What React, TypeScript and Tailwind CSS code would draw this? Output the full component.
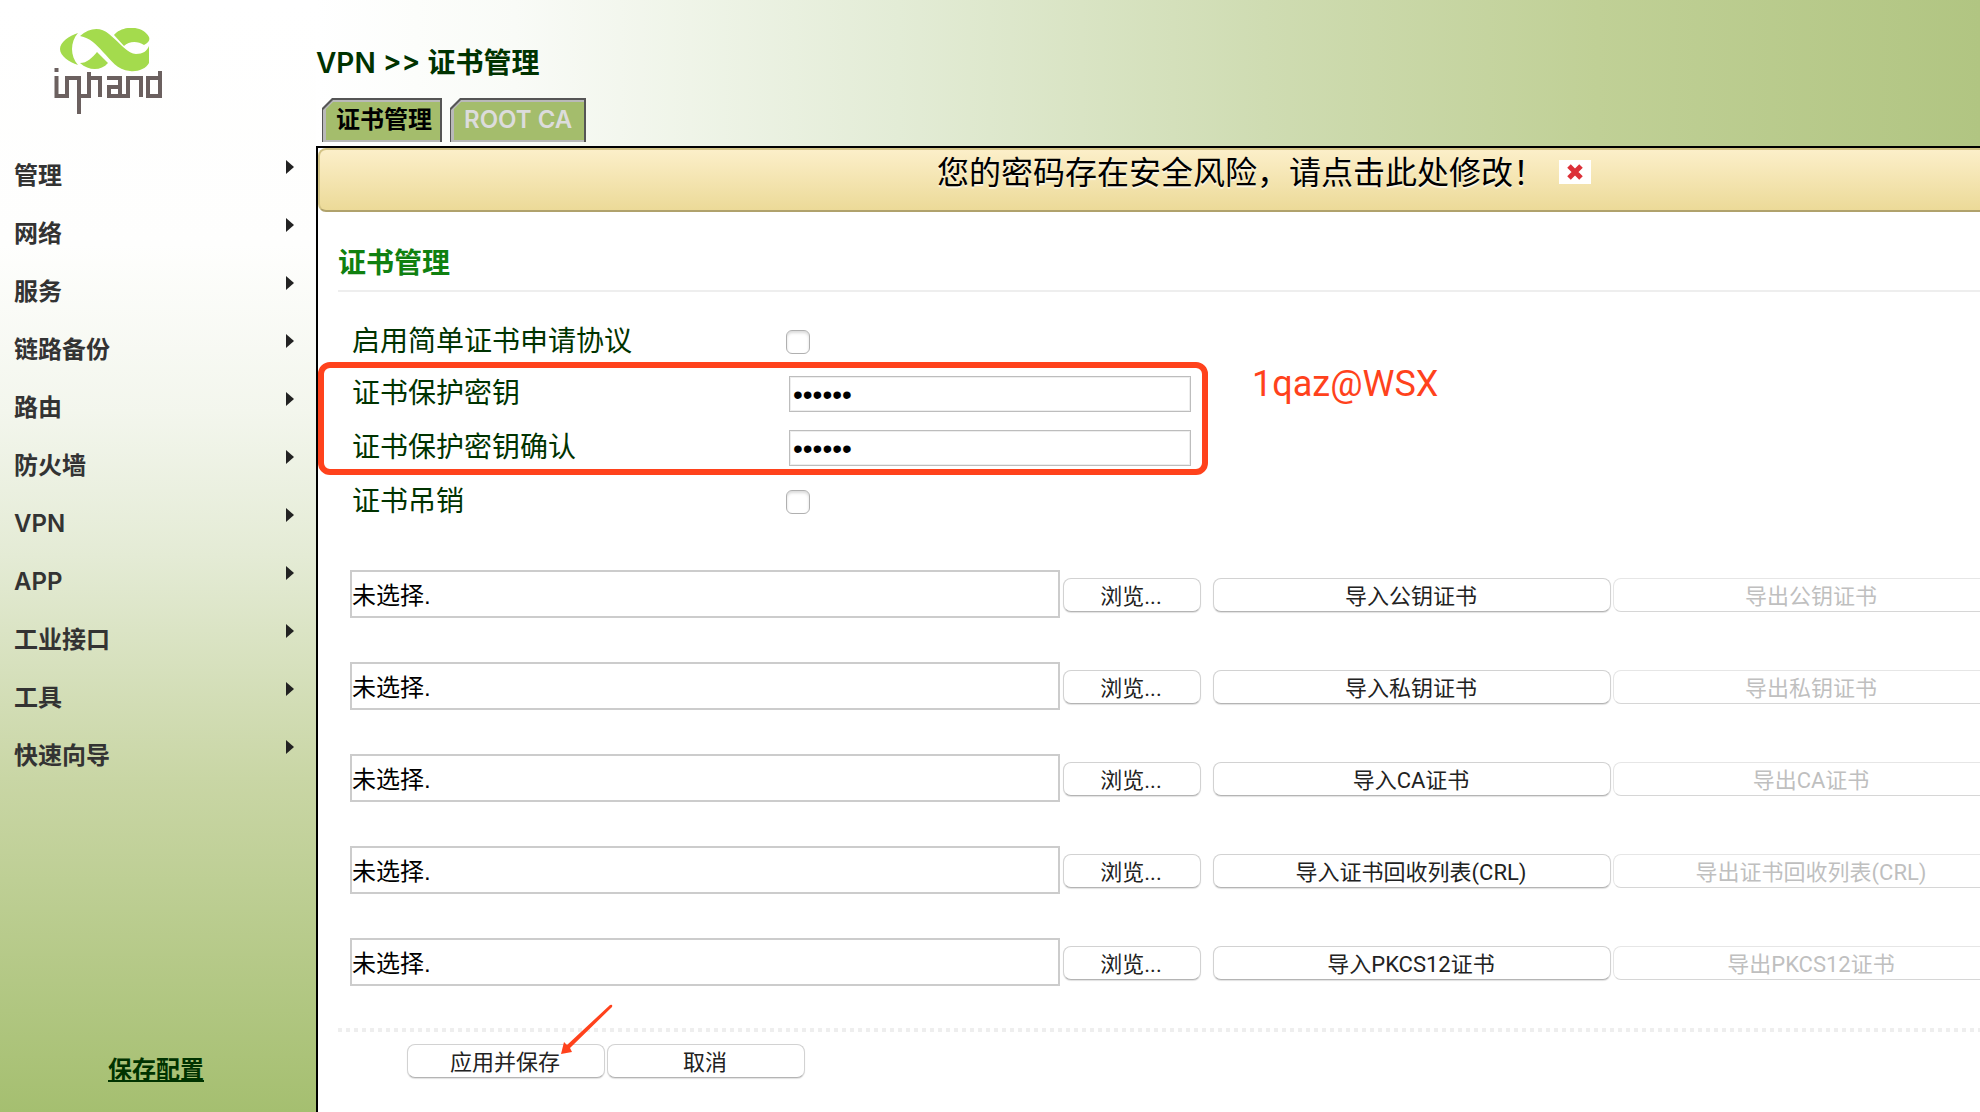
import React from "react";

const menu = ["管理", "网络", "服务", "链路备份", "路由", "防火墙", "VPN", "APP", "工业接口", "工具", "快速向导"];

const files = [
  ["导入公钥证书", "导出公钥证书"],
  ["导入私钥证书", "导出私钥证书"],
  ["导入CA证书", "导出CA证书"],
  ["导入证书回收列表(CRL)", "导出证书回收列表(CRL)"],
  ["导入PKCS12证书", "导出PKCS12证书"],
];

const buttonClass =
  "h-[34px] shrink-0 rounded-lg border border-[#d2d2d2] border-b-[#b4b4b4] bg-white pt-0.5 pr-0.5 font-['Roboto','Noto_Sans_CJK_SC',sans-serif] text-[22px] leading-8 text-[#222] shadow-[0_1px_1px_rgba(0,0,0,0.12)] disabled:border-[#e6e6e6] disabled:border-b-[#d6d6d6] disabled:text-[#bfbfbf] disabled:shadow-none";

const checkClass =
  "-ml-[3px] block size-6 appearance-none rounded-md border border-[#b0b0b0] bg-white shadow-[inset_0_2px_3px_rgba(0,0,0,0.15)] checked:bg-[#108010]";

const inputClass =
  "block h-9 w-[402px] border border-[#bdbdbd] bg-white px-[3px] pt-0.5 text-[28px] leading-8 text-black shadow-[inset_0_0_0_1px_#eee]";

function Logo() {
  return (
    <svg aria-label="inhand" role="img" viewBox="0 0 110 90" className="ml-[53px] h-[90px] w-[110px] shrink-0">
      <g fill="#a4db4d">
        <path d="M25 5C16 8 7 14 7 21c0 7 9 13 18 16C17 28 17 14 25 5Z" />
        <path d="M27 8C36 0 47-2 56 6c12 10 19 20 27 20 7 0 11-3 13-8V35C93 41 84 44 77 43 64 42 58 32 50 24 43 16 37 10 27 8Z" />
        <path d="M27 35c7 0 12-5 17-11l11 11C48 43 36 43 27 35Z" />
        <path d="M61 7C68-2 89-4 96 9c1 3 0 5-5 8C85 13 76 13 71 18Z" />
      </g>
      <g fill="none" stroke="#6b605f" strokeWidth="4">
        <path d="M3.500 40v4M3.500 48v20H14V50h12v36" />
        <path d="M26 68h10V44M36 50h11v19" />
        <path d="M54 50h13v18H56v-9h11M67 68h8V50h13v19" />
        <path d="M107 43v25H95V50h12" />
      </g>
    </svg>
  );
}

function Field({ id, label, children }: { id: string; label: string; children: React.ReactNode }) {
  return (
    <div className="flex h-[54px] items-center">
      <label htmlFor={id} className="w-[451px] shrink-0 pl-3.5 text-[28px] leading-9 text-[#003300]">
        {label}
      </label>
      {children}
    </div>
  );
}

function Tab({ label, active }: { label: string; active?: boolean }) {
  return (
    <button
      type="button"
      className="h-11 bg-[#555] pt-0.5 pr-0.5 pl-px [clip-path:polygon(10px_0,100%_0,100%_100%,0_100%,0_10px)]"
    >
      <span className="block h-full bg-[#b9b9b9] pt-0.5 pb-0.5 pl-[3px] [clip-path:polygon(10px_0,100%_0,100%_100%,0_100%,0_10px)]">
        <span
          className={
            "block h-full bg-[#a4bd6c] pl-2.5 text-2xl leading-9 font-semibold whitespace-nowrap [clip-path:polygon(7px_0,100%_0,100%_100%,0_100%,0_7px)] " +
            (active ? "pr-2 text-black" : "pr-3 text-[#dcdcdc]")
          }
        >
          {label}
        </span>
      </span>
    </button>
  );
}

export default function App() {
  return (
    <div className="flex min-h-screen overflow-hidden bg-white font-['Liberation_Sans','Noto_Sans_CJK_SC',sans-serif]">
      <aside className="flex w-[316px] shrink-0 flex-col bg-[linear-gradient(to_bottom,#ffffff_0%,#fefefd_22%,#f3f6ed_37%,#e4ebd5_50%,#c9d6a5_70%,#a5bf70_100%)] pt-7">
        <Logo />
        <nav className="mt-7 font-['Inter','Noto_Sans_CJK_SC',sans-serif]">
          <ul>
            {menu.map((item) => (
              <li key={item}>
                <a href="#" className="flex h-[58px] items-start justify-between pr-[22px] pl-3.5 text-2xl font-semibold text-[#333]">
                  <span className="pt-3.5">{item}</span>
                  <svg viewBox="0 0 8 14" className="mt-3.5 h-3.5 w-2" fill="#222">
                    <path d="M0 0 8 7 0 14Z" />
                  </svg>
                </a>
              </li>
            ))}
          </ul>
        </nav>
        <a href="#" className="mt-auto mb-6 ml-[108px] self-start text-2xl leading-9 font-bold text-[#003300] underline">
          保存配置
        </a>
      </aside>

      <main className="flex min-w-0 flex-1 flex-col overflow-hidden">
        <header className="h-[146px] bg-[linear-gradient(to_right,#ffffff_0%,#f9fbf7_12%,#e3ecd6_35%,#cfdcb2_57%,#c0d096_77%,#b1c582_100%)] font-['Inter','Noto_Sans_CJK_SC',sans-serif]">
          <h1 className="pt-[45px] text-[28px] leading-9 font-semibold text-[#003300]">VPN &gt;&gt; 证书管理</h1>
          <div className="mt-[17px] flex gap-2 pl-1.5">
            <Tab label="证书管理" active />
            <Tab label="ROOT CA" />
          </div>
        </header>

        <div className="flex-1 border-t-2 border-l-2 border-black">
          <div className="flex h-16 min-w-[1892px] items-start justify-center gap-3.5 rounded-lg border-2 border-[#d3c385] border-b-[#b0a26c] bg-linear-to-b from-[#fcefc9] to-[#ecda98] pt-[3px]">
            <a href="#" className="text-[32px] leading-10 text-black [text-shadow:0_2px_1px_rgba(255,255,255,0.7)]">
              您的密码存在安全风险，请点击此处修改！
            </a>
            <button type="button" aria-label="关闭" className="mt-[7px] flex h-6 w-8 items-center justify-center bg-white">
              <svg viewBox="0 0 16 16" className="size-4" stroke="#dc3038" strokeWidth="5">
                <path d="M2 2 14 14M14 2 2 14" />
              </svg>
            </button>
          </div>

          <section className="pl-5">
            <h2 className="border-b-2 border-[#eee] pt-[34px] pb-2 text-[28px] leading-9 font-bold text-[#108010]">证书管理</h2>
            <div className="relative mt-[22px] mb-[42px] h-[214px]">
              <div className="pt-px">
                <Field id="scep" label="启用简单证书申请协议">
                  <input id="scep" type="checkbox" className={checkClass} />
                </Field>
              </div>
              <div className="-mt-0.5">
                <Field id="key" label="证书保护密钥">
                  <input id="key" type="password" defaultValue="secret" className={inputClass} />
                </Field>
                <Field id="confirm" label="证书保护密钥确认">
                  <input id="confirm" type="password" defaultValue="secret" className={inputClass} />
                </Field>
                <Field id="revoke" label="证书吊销">
                  <input id="revoke" type="checkbox" className={checkClass} />
                </Field>
              </div>
              <div className="pointer-events-none absolute top-12 -left-5 h-[113px] w-[890px] rounded-xl border-6 border-[#ff421c]" />
              <p className="absolute top-12 left-[914px] font-[Roboto] text-4xl leading-11 text-[#ff421c]">1qaz@WSX</p>
            </div>

            <div className="flex flex-col gap-11 pl-3">
              {files.map(([load, save]) => (
                <div key={load} className="flex items-center">
                  <input
                    type="text"
                    readOnly
                    aria-label={load}
                    value="未选择."
                    className="h-12 w-[710px] shrink-0 border-2 border-[#ccc] pb-0.5 text-2xl text-black"
                  />
                  <button type="button" className={buttonClass + " mt-0.5 ml-[3px] w-[138px]"}>
                    浏览...
                  </button>
                  <button type="button" className={buttonClass + " mt-0.5 ml-3 w-[398px]"}>
                    {load}
                  </button>
                  <button type="button" disabled className={buttonClass + " mt-0.5 ml-0.5 w-[398px]"}>
                    {save}
                  </button>
                </div>
              ))}
            </div>

            <div className="mt-[42px] h-1 bg-[repeating-linear-gradient(to_right,#eee_0_4px,transparent_4px_8px)]" />
            <div className="relative mt-3 flex gap-0.5 pl-[69px]">
              <button type="button" className={buttonClass + " w-[198px]"}>
                应用并保存
              </button>
              <button type="button" className={buttonClass + " w-[198px]"}>
                取消
              </button>
              <svg viewBox="0 0 54 52" className="pointer-events-none absolute -top-10 left-[222px] h-[52px] w-[54px]" fill="#ff421c">
                <path d="M1 50 4 38 7 41 50 1Q53 0 52 3L10 44 12 48Z" />
              </svg>
            </div>
          </section>
        </div>
      </main>
    </div>
  );
}
